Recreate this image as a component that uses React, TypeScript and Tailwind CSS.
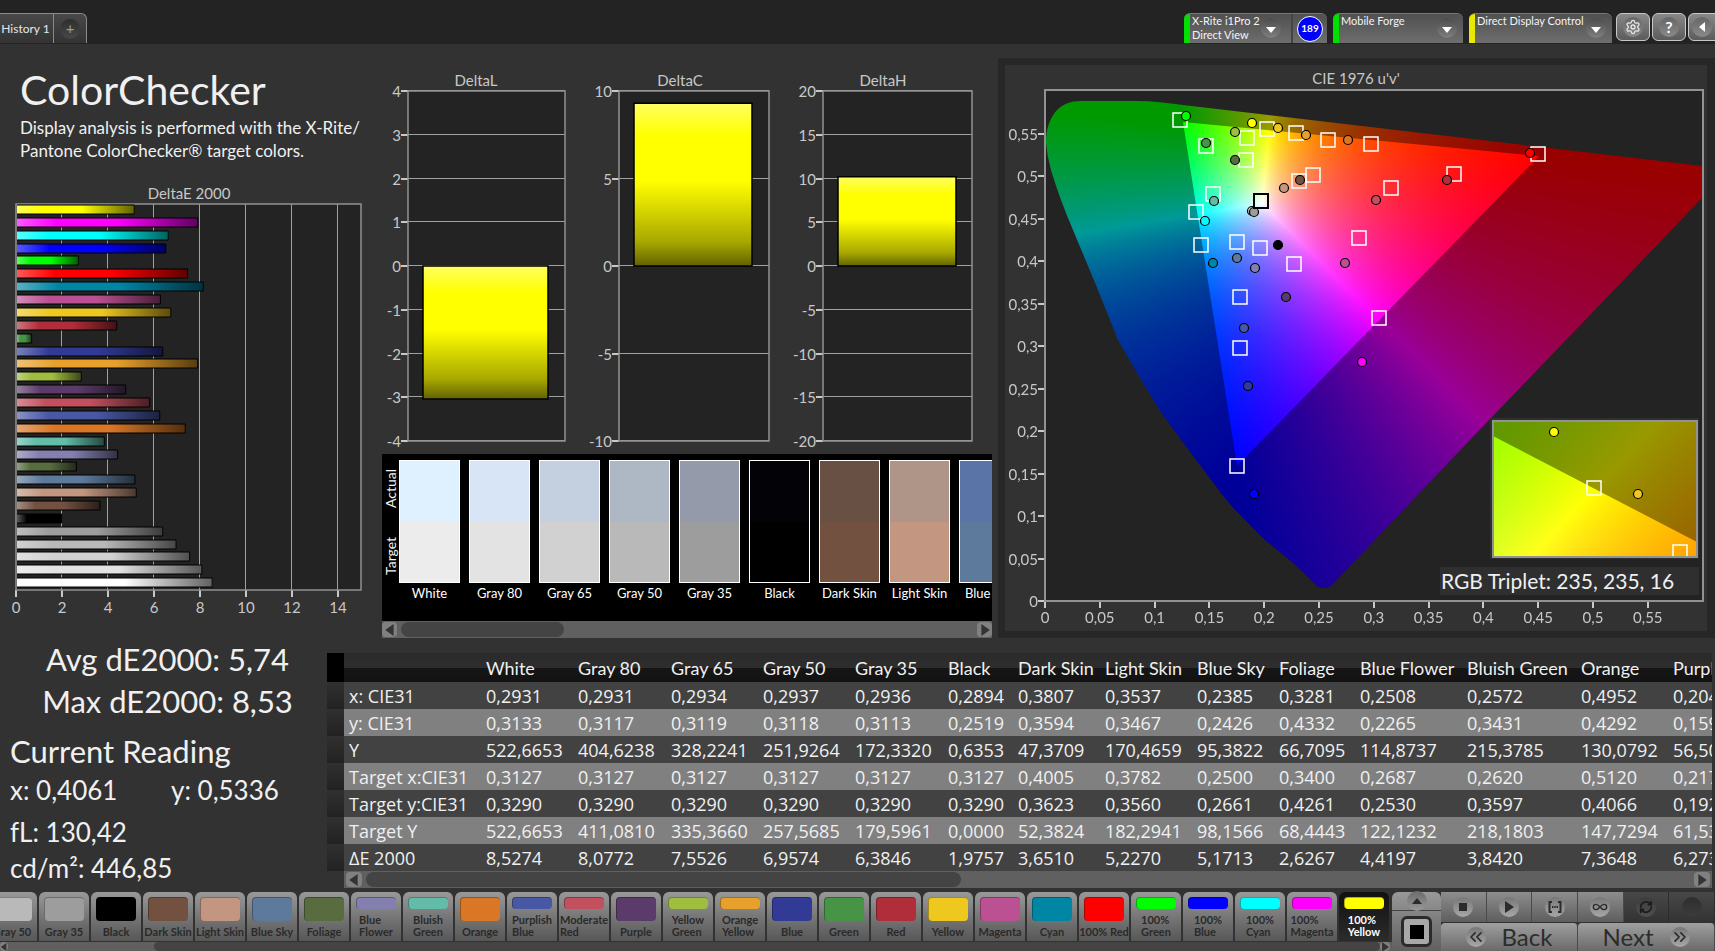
import { useEffect, useRef, type ReactNode } from 'react';
import { Settings, RefreshCw, Infinity as Loop, ChevronsLeft, ChevronsRight } from 'lucide-react';
import clsx from 'clsx';

interface Patch { name: string; color: string; de: number; actual?: string; lines?: string[]; }
interface Column { name: string; width: string; values: string[]; }
interface DeltaProps { title: string; x: number; w: number; titleX: number; max: number; step: number; value: number; barX: number; barW: number; }

const patches: Patch[] = [
  { name: 'White', color: '#ececec', de: 8.53, actual: '#dff1ff' },
  { name: 'Gray 80', color: '#e3e3e3', de: 8.08, actual: '#d8e5f7' },
  { name: 'Gray 65', color: '#d1d1d1', de: 7.55, actual: '#c4d0e0' },
  { name: 'Gray 50', color: '#b9b9b9', de: 6.96, actual: '#adb8c4' },
  { name: 'Gray 35', color: '#9d9d9d', de: 6.38, actual: '#949aa9' },
  { name: 'Black', color: '#000000', de: 1.98, actual: '#030207' },
  { name: 'Dark Skin', color: '#735141', de: 3.65, actual: '#685144' },
  { name: 'Light Skin', color: '#c29680', de: 5.23, actual: '#af9588' },
  { name: 'Blue Sky', color: '#5d7a9c', de: 5.17, actual: '#5a74a7' },
  { name: 'Foliage', color: '#586c40', de: 2.63 },
  { name: 'Blue Flower', color: '#8380b0', de: 4.42, lines: ['Blue', 'Flower'] },
  { name: 'Bluish Green', color: '#62bca8', de: 3.84, lines: ['Bluish', 'Green'] },
  { name: 'Orange', color: '#d97726', de: 7.36 },
  { name: 'Purplish Blue', color: '#4958a4', de: 6.25, lines: ['Purplish', 'Blue'] },
  { name: 'Moderate Red', color: '#c2505e', de: 5.81, lines: ['Moderate', 'Red'] },
  { name: 'Purple', color: '#5b3b69', de: 4.77 },
  { name: 'Yellow Green', color: '#9fbd3f', de: 2.84, lines: ['Yellow', 'Green'] },
  { name: 'Orange Yellow', color: '#e6a02b', de: 7.9, lines: ['Orange', 'Yellow'] },
  { name: 'Blue', color: '#313b96', de: 6.38 },
  { name: 'Green', color: '#479447', de: 0.68 },
  { name: 'Red', color: '#b02e39', de: 4.38 },
  { name: 'Yellow', color: '#eec81e', de: 6.73 },
  { name: 'Magenta', color: '#bb5192', de: 6.28 },
  { name: 'Cyan', color: '#0086a5', de: 8.14 },
  { name: '100% Red', color: '#ff0000', de: 7.46 },
  { name: '100% Green', color: '#00ff00', de: 2.71, lines: ['100%', 'Green'] },
  { name: '100% Blue', color: '#0000ff', de: 6.51, lines: ['100%', 'Blue'] },
  { name: '100% Cyan', color: '#00ffff', de: 6.62, lines: ['100%', 'Cyan'] },
  { name: '100% Magenta', color: '#ff00ff', de: 7.9, lines: ['100%', 'Magenta'] },
  { name: '100% Yellow', color: '#ffff00', de: 5.14, lines: ['100%', 'Yellow'] },
];

const rowLabels = ['x: CIE31', 'y: CIE31', 'Y', 'Target x:CIE31', 'Target y:CIE31', 'Target Y', 'ΔE 2000'];

const columns: Column[] = [
  { name: 'White', width: 'w-[92px]', values: ['0,2931', '0,3133', '522,6653', '0,3127', '0,3290', '522,6653', '8,5274'] },
  { name: 'Gray 80', width: 'w-[93px]', values: ['0,2931', '0,3117', '404,6238', '0,3127', '0,3290', '411,0810', '8,0772'] },
  { name: 'Gray 65', width: 'w-[92px]', values: ['0,2934', '0,3119', '328,2241', '0,3127', '0,3290', '335,3660', '7,5526'] },
  { name: 'Gray 50', width: 'w-[92px]', values: ['0,2937', '0,3118', '251,9264', '0,3127', '0,3290', '257,5685', '6,9574'] },
  { name: 'Gray 35', width: 'w-[93px]', values: ['0,2936', '0,3113', '172,3320', '0,3127', '0,3290', '179,5961', '6,3846'] },
  { name: 'Black', width: 'w-[70px]', values: ['0,2894', '0,2519', '0,6353', '0,3127', '0,3290', '0,0000', '1,9757'] },
  { name: 'Dark Skin', width: 'w-[87px]', values: ['0,3807', '0,3594', '47,3709', '0,4005', '0,3623', '52,3824', '3,6510'] },
  { name: 'Light Skin', width: 'w-[92px]', values: ['0,3537', '0,3467', '170,4659', '0,3782', '0,3560', '182,2941', '5,2270'] },
  { name: 'Blue Sky', width: 'w-[82px]', values: ['0,2385', '0,2426', '95,3822', '0,2500', '0,2661', '98,1566', '5,1713'] },
  { name: 'Foliage', width: 'w-[81px]', values: ['0,3281', '0,4332', '66,7095', '0,3400', '0,4261', '68,4443', '2,6267'] },
  { name: 'Blue Flower', width: 'w-[107px]', values: ['0,2508', '0,2265', '114,8737', '0,2687', '0,2530', '122,1232', '4,4197'] },
  { name: 'Bluish Green', width: 'w-[114px]', values: ['0,2572', '0,3431', '215,3785', '0,2620', '0,3597', '218,1803', '3,8420'] },
  { name: 'Orange', width: 'w-[92px]', values: ['0,4952', '0,4292', '130,0792', '0,5120', '0,4066', '147,7294', '7,3648'] },
  { name: 'Purplish Blue', width: 'w-[120px]', values: ['0,2041', '0,1593', '56,5012', '0,2170', '0,1920', '61,5324', '6,2731'] },
];

// positions inside the 658x510 plot area
const targets = [
  [135, 30], [161, 56], [202, 48], [222, 39], [251, 43], [283, 50], [326, 54], [493, 64], [201, 70], [254, 91], [268, 85], [346, 98], [409, 84],
  [168, 104], [151, 122], [156, 155], [192, 152], [215, 158], [249, 174], [314, 148], [195, 207], [334, 228], [195, 258], [192, 376],
];
const readings: [number, number, string][] = [
  [141, 26, '#00ff00'], [207, 33, '#ffff00'], [190, 42, '#9fbd3f'], [233, 38, '#eec81e'], [261, 45, '#e6a02b'], [303, 50, '#d97726'],
  [161, 53, '#479447'], [190, 70, '#586c40'], [255, 90, '#735141'], [239, 98, '#c29680'], [485, 63, '#ff0000'], [402, 90, '#b02e39'],
  [331, 110, '#c2505e'], [169, 111, '#62bca8'], [160, 131, '#00ffff'], [207, 121, '#d1d1d1'], [209, 122, '#9d9d9d'], [233, 155, '#000000'],
  [168, 173, '#0086a5'], [192, 168, '#5d7a9c'], [210, 178, '#8380b0'], [300, 173, '#bb5192'], [241, 207, '#5b3b69'], [199, 238, '#4958a4'],
  [317, 272, '#ff00ff'], [203, 296, '#313b96'], [209, 404, '#0000ff'],
];

const locus = 'M1 53C1 38 5 28 12 20C18 14 26 11 36 11L92 11C108 11 122 13 138 15L658 76V107L521 250L446 328L286 496Q279 500 272 496L247 472L220 450L197 427Q182 412 170 395L142 358L115 321L92 283L73 250L53 200L28 140Q15 110 6 80Q2 66 1 53Z';
const gamut = 'M138 32L494 66L192 376Z';

function paint(canvas: HTMLCanvasElement, toXy: (px: number, py: number) => [number, number], triangle: string, outline?: string) {
  const ctx = canvas.getContext('2d');
  if (!ctx) return;
  const { width, height } = canvas;
  const img = ctx.createImageData(width, height);
  for (let py = 0; py < height; py++) {
    for (let px = 0; px < width; px++) {
      const [x, y] = toXy(px, py);
      const z = 1 - x - y;
      const r = Math.max(0, 3.2406 * x - 1.5372 * y - 0.4986 * z);
      const g = Math.max(0, -0.9689 * x + 1.8758 * y + 0.0415 * z);
      const b = Math.max(0, 0.0557 * x - 0.204 * y + 1.057 * z);
      const m = Math.max(r, g, b) || 1;
      const i = (py * width + px) * 4;
      img.data[i] = (r / m) * 255;
      img.data[i + 1] = (g / m) * 255;
      img.data[i + 2] = (b / m) * 255;
      img.data[i + 3] = 255;
    }
  }
  ctx.putImageData(img, 0, 0);
  // everything outside the display gamut is dimmed
  ctx.fillStyle = 'rgba(0,0,0,0.4)';
  ctx.fill(new Path2D(`M0 0H${width}V${height}H0Z${triangle}`), 'evenodd');
  if (outline) {
    ctx.globalCompositeOperation = 'destination-in';
    ctx.fillStyle = '#000';
    ctx.fill(new Path2D(outline));
    ctx.globalCompositeOperation = 'source-over';
  }
}

function Chromaticity() {
  const main = useRef<HTMLCanvasElement>(null);
  const inset = useRef<HTMLCanvasElement>(null);

  useEffect(() => {
    if (main.current) {
      paint(main.current, (px, py) => {
        const u = px / 1096;
        const v = (510 - py) / 848;
        const d = 6 * u - 16 * v + 12;
        return [(9 * u) / d, (4 * v) / d];
      }, gamut, locus);
    }
    if (inset.current) paint(inset.current, (px, py) => [0.4193 + (px - 101) / 3038, 0.5053 - (py - 67) / 1990], 'M0 15L204 121V136H0Z');
  }, []);

  return (
    <svg viewBox="0 0 702 565" className="block w-full bg-[#323232] text-[15px]" fontFamily="Lato, sans-serif">
      <text x="351" y="19" textAnchor="middle" fill="#c8c8c8">CIE 1976 u'v'</text>
      <rect x="40" y="25" width="658" height="510" fill="#232323" />
      <foreignObject x="40" y="25" width="658" height="510"><canvas ref={main} width={658} height={510} className="block" /></foreignObject>
      <rect x="40" y="25" width="658" height="511" fill="none" stroke="#929292" strokeWidth="2" />
      {Array.from({ length: 12 }, (_, i) => {
        const label = String((i * 5) / 100).replace('.', ',');
        const x = 40 + i * 54.8;
        const y = 536 - i * 42.5;
        return (
          <g key={i} fill="#c8c8c8">
            <rect x={Math.round(x) - 1} y="537" width="2" height="6" />
            <rect x="33" y={Math.round(y) - 1} width="6" height="2" />
            <text x={x} y="558" textAnchor="middle">{label}</text>
            <text x="33" y={y + 6} textAnchor="end">{label}</text>
          </g>
        );
      })}
      <g transform="translate(40 25)">
        {targets.map(([x, y]) => <rect key={`${x}-${y}`} x={x - 7} y={y - 7} width="14" height="14" fill="none" stroke="#fff" strokeWidth="1.5" />)}
        {readings.map(([x, y, c]) => <circle key={`${x}-${y}`} cx={x} cy={y} r="4.5" fill={c} stroke="#000" strokeWidth="1.2" />)}
        <rect x="209" y="104" width="14" height="14" fill="none" stroke="#000" strokeWidth="2" />
      </g>
      <rect x="485" y="353" width="209" height="141" fill="#2f2f2f" />
      <foreignObject x="488" y="356" width="204" height="136"><canvas ref={inset} width={204} height={136} className="block" /></foreignObject>
      <path d="M668 492V480H682V492" fill="none" stroke="#fff" strokeWidth="1.5" />
      <rect x="488" y="356" width="204" height="136" fill="none" stroke="#929292" strokeWidth="2" />
      <rect x="582" y="416" width="14" height="14" fill="none" stroke="#fff" strokeWidth="1.5" />
      <circle cx="549" cy="367" r="4.5" fill="#ffff00" stroke="#000" strokeWidth="1.2" />
      <circle cx="633" cy="429" r="4.5" fill="#eec81e" stroke="#000" strokeWidth="1.2" />
      <rect x="435" y="502" width="259" height="28" fill="#2f2f2f" />
      <text x="436" y="524" fill="#f0f0f0" fontSize="21">RGB Triplet: 235, 235, 16</text>
    </svg>
  );
}

function DeltaEChart() {
  const bars = [...patches].reverse();
  return (
    <svg viewBox="0 0 382 444" className="block w-full text-[15px]" fontFamily="Lato, sans-serif">
      <defs>
        <linearGradient id="shadeX">
          <stop offset="0" stopColor="#fff" stopOpacity="0.35" />
          <stop offset="0.22" stopColor="#fff" stopOpacity="0" />
          <stop offset="0.55" stopColor="#000" stopOpacity="0" />
          <stop offset="1" stopColor="#000" stopOpacity="0.62" />
        </linearGradient>
      </defs>
      <text x="189" y="15" textAnchor="middle" fill="#c8c8c8">DeltaE 2000</text>
      <rect x="16" y="20" width="345" height="386" fill="#232323" />
      {[0, 2, 4, 6, 8, 10, 12, 14].map((n) => (
        <g key={n} fill="#c8c8c8">
          {n > 0 && <rect x={15 + n * 23} y="20" width="1" height="386" fill="#a0a0a0" />}
          <rect x={15 + n * 23} y="406" width="2" height="7" />
          <text x={16 + n * 23} y="429" textAnchor="middle">{n}</text>
        </g>
      ))}
      <rect x="16" y="20" width="345" height="386" fill="none" stroke="#929292" strokeWidth="1.5" />
      {bars.map((p, i) => {
        const y = Math.round(21 + i * 12.87);
        return (
          <g key={p.name}>
            <rect x="17" y={y} width={p.de * 23 - 1} height="9" fill={p.name === 'White' ? '#ffffff' : p.color} />
            <rect x="17" y={y} width={p.de * 23 - 1} height="9" fill="url(#shadeX)" />
            <path d={`M17 ${y}H${16 + p.de * 23}V${y + 9}H17`} fill="none" stroke="#000" />
          </g>
        );
      })}
    </svg>
  );
}

function DeltaChart({ title, x, w, titleX, max, step, value, barX, barW }: DeltaProps) {
  const ticks: number[] = [];
  for (let n = max; n >= -max; n -= step) ticks.push(n);
  const toY = (n: number) => 222 - (n / max) * 175;
  const top = Math.min(toY(0), toY(value));
  return (
    <g>
      <text x={titleX} y="42" textAnchor="middle" fill="#c8c8c8">{title}</text>
      <rect x={x} y="47" width={w} height="350" fill="#232323" />
      {ticks.map((n) => (
        <g key={n}>
          <rect x={x - 7} y={Math.round(toY(n)) - 1} width="7" height="2" fill="#c8c8c8" />
          <rect x={x} y={Math.round(toY(n)) - 1} width={w} height="1" fill="#a0a0a0" />
          <text x={x - 7} y={toY(n) + 6} textAnchor="end" fill="#c8c8c8">{n}</text>
        </g>
      ))}
      <rect x={x} y="47" width={w} height="350" fill="none" stroke="#929292" strokeWidth="1.5" />
      <rect x={barX} y={top} width={barW} height={Math.abs(toY(value) - toY(0))} fill="url(#yellowY)" stroke="#000" strokeWidth="1.5" />
    </g>
  );
}

function ArrowButton({ dir, label, className }: { dir: 'left' | 'right'; label: string; className?: string }) {
  return (
    <button aria-label={label} className={clsx('flex shrink-0 items-center justify-center rounded bg-[#808080]', className)}>
      <svg viewBox="0 0 10 10" className="h-3 w-3" fill="#333"><path d={dir === 'left' ? 'M8 0V10L1 5Z' : 'M2 0V10L9 5Z'} /></svg>
    </button>
  );
}

function Round({ children, className }: { children?: ReactNode; className?: string }) {
  return <span className={clsx('flex h-5 w-5 shrink-0 items-center justify-center rounded-full bg-gradient-to-b', className ?? 'from-[#777] to-[#a8a8a8]')}>{children}</span>;
}

function Device({ bar, lines, width, badge }: { bar: string; lines: string[]; width: string; badge?: string }) {
  return (
    <div className={clsx('flex h-[30px] overflow-hidden rounded-t-md border-t border-[#777] bg-gradient-to-b from-[#505050] to-[#6e6e6e]', width)}>
      <span className={clsx('w-1.5 shrink-0', bar)} />
      <button className={clsx('flex min-w-0 flex-1 justify-between pl-0.5 text-left text-[11px] leading-[14px] text-gray-100', badge ? 'pr-2.5' : 'pr-1.5')}>
        <span className="whitespace-nowrap">{lines.map((l) => <span key={l} className="block">{l}</span>)}</span>
        <Round className="mt-1 from-[#4c4c4c] to-[#808080]"><svg viewBox="0 0 10 6" className="mt-1 h-1.5 w-2.5" fill="#fff"><path d="M0 0H10L5 6Z" /></svg></Round>
      </button>
      {badge && (
        <span className="flex w-9 shrink-0 items-center justify-center border-l-2 border-[#444]">
          <span className="flex h-[26px] w-[26px] items-center justify-center rounded-full border border-white bg-[#0000ff] text-[10px] font-bold text-white">{badge}</span>
        </span>
      )}
    </div>
  );
}

function TopBar() {
  const square = 'flex h-7 w-[34px] shrink-0 items-center justify-center rounded-md border border-[#c8c8c8] bg-gradient-to-b from-[#888] to-[#5c5c5c]';
  return (
    <header className="flex h-11 items-start justify-between bg-[#232323] pt-[13px]">
      <div className="flex h-[30px] overflow-hidden rounded-tr-md border-t border-r border-[#8a8a8a] bg-gradient-to-b from-[#484848] to-[#333] text-gray-200">
        <button className="w-[53px] whitespace-nowrap pr-0.5 text-[12px]">History 1</button>
        <button aria-label="Add history" className="flex w-[33px] items-center justify-center border-l border-[#8a8a8a]">
          <Round className="from-[#2e2e2e] to-[#484848] text-[15px] leading-none text-[#9a9a9a]">+</Round>
        </button>
      </div>
      <div className="flex">
        <Device bar="bg-[#00e000]" lines={['X-Rite i1Pro 2', 'Direct View']} width="w-[143px]" badge="189" />
        <Device bar="bg-[#00e000]" lines={['Mobile Forge']} width="ml-1.5 w-[130px]" />
        <Device bar="bg-[#e8e800]" lines={['Direct Display Control']} width="ml-1.5 w-[143px]" />
        <button aria-label="Settings" className={clsx(square, 'ml-1')}><Round className="from-[#666] to-[#8a8a8a]"><Settings className="h-4 w-4 text-gray-200" /></Round></button>
        <button aria-label="Help" className={clsx(square, 'ml-0.5')}><Round className="from-[#666] to-[#8a8a8a] text-[16px] font-bold text-white">?</Round></button>
        <div className="ml-0.5 w-[27px] overflow-hidden">
          <button aria-label="Collapse" className={square}><Round className="mr-1.5 from-[#666] to-[#8a8a8a]"><svg viewBox="0 0 6 10" className="h-2.5 w-1.5" fill="#fff"><path d="M6 0V10L0 5Z" /></svg></Round></button>
        </div>
      </div>
    </header>
  );
}

function SwatchStrip() {
  return (
    <div className="mr-1.5 bg-black">
      <div className="flex h-[167px]">
        <div className="flex h-[136px] w-[17px] shrink-0 rotate-180 text-center text-[14px] leading-[17px] text-gray-100 [writing-mode:vertical-rl]">
          <span className="flex-1">Target</span>
          <span className="flex-1">Actual</span>
        </div>
        <div className="flex min-w-0 flex-1 gap-[9px] overflow-hidden pt-1.5">
          {patches.slice(0, 9).map((p) => (
            <figure key={p.name} className="w-[61px] shrink-0">
              <div className="flex h-[123px] flex-col border border-white" style={{ backgroundColor: p.color }}>
                <div className="h-1/2" style={{ backgroundColor: p.actual }} />
              </div>
              <figcaption className="flex justify-center whitespace-nowrap text-[13px] leading-5 text-white">{p.name}</figcaption>
            </figure>
          ))}
        </div>
      </div>
      <div className="flex h-[17px] items-center gap-1 bg-[#606060]">
        <ArrowButton dir="left" label="Scroll swatches left" className="h-[15px] w-[15px]" />
        <div className="h-[15px] w-[163px] rounded-full bg-[#444]" />
        <ArrowButton dir="right" label="Scroll swatches right" className="ml-auto h-[15px] w-[15px]" />
      </div>
    </div>
  );
}

function Readings() {
  return (
    <div className="w-[327px] shrink-0 whitespace-nowrap text-[#f0f0f0]">
      <div className="pl-2 text-center text-[31px] leading-[42px]">
        <p>Avg dE2000: 5,74</p>
        <p>Max dE2000: 8,53</p>
      </div>
      <div className="pl-2.5">
        <h2 className="pt-2 text-[31px] leading-[42px]">Current Reading</h2>
        <p className="flex text-[26px] leading-9"><span className="w-[161px]">x: 0,4061</span><span>y: 0,5336</span></p>
        <p className="pt-1 text-[26px] leading-10">fL: 130,42</p>
        <p className="text-[26px] leading-8">cd/m²: 446,85</p>
      </div>
    </div>
  );
}

function DataTable() {
  return (
    <div className="mr-[3px] min-w-0 flex-1 pt-[15px]">
      <div className="overflow-hidden">
        <table className="w-[1461px] table-fixed border-collapse text-left text-[#f0f0f0]">
          <thead>
            <tr className="h-[29px] bg-linear-[to_bottom,#2a2a2a_0,#2e2e2e_50%,#161616_50%,#121212_100%] text-[18px] leading-7">
              <th className="w-[17px] bg-black" />
              <th className="w-[137px]" />
              {columns.map((c) => <th key={c.name} scope="col" className={clsx('whitespace-nowrap pl-[5px] font-normal', c.width)}>{c.name}</th>)}
            </tr>
          </thead>
          <tbody className="font-['Open_Sans','Noto_Sans',sans-serif] text-[18px] leading-[26px]">
            {rowLabels.map((label, i) => (
              <tr key={label} className={clsx('h-[27px]', i % 2 ? 'bg-[#808080]' : 'bg-[#424242]')}>
                <td className="bg-gradient-to-b from-[#303030] to-[#222]" />
                <th scope="row" className="whitespace-nowrap pl-[5px] font-normal">{label}</th>
                {columns.map((c) => <td key={c.name} className="pl-[5px]">{c.values[i]}</td>)}
              </tr>
            ))}
          </tbody>
        </table>
      </div>
      <div className="ml-[17px] flex h-[17px] items-center gap-1 bg-[#606060] px-0.5">
        <ArrowButton dir="left" label="Scroll table left" className="h-[15px] w-4" />
        <div className="h-[15px] w-[595px] rounded-full bg-[#444]" />
        <ArrowButton dir="right" label="Scroll table right" className="ml-auto h-[15px] w-4" />
      </div>
    </div>
  );
}

function PatchBar() {
  return (
    <div className="min-w-0 flex-1 overflow-hidden">
      <div className="flex h-[50px] justify-end gap-0.5 pr-[3px]">
        {patches.slice(3).map((p) => {
          const active = p.name === '100% Yellow';
          return (
            <button key={p.name} className={clsx('flex h-[49px] w-[50px] shrink-0 flex-col items-center justify-between rounded-t-md bg-gradient-to-b pt-[5px] pb-[3px] text-[11px] font-bold leading-3', active ? 'from-[#111] to-[#2c2c2c] text-white' : 'from-[#999] to-[#575757] text-[#2a2a2a]')}>
              <span className={clsx('w-10 rounded border-t border-l border-black/30', p.lines ? 'h-3' : 'h-6')} style={{ backgroundColor: p.color }} />
              <span className="whitespace-nowrap text-left">{(p.lines ?? [p.name]).map((l) => <span key={l} className="block">{l}</span>)}</span>
            </button>
          );
        })}
      </div>
      <div className="flex h-[9px] items-center bg-[#606060]">
        <ArrowButton dir="left" label="Scroll patches left" className="h-[9px] w-2 overflow-hidden" />
        <div className="ml-[146px] h-[9px] flex-1 rounded-full bg-[#444]" />
        <ArrowButton dir="right" label="Scroll patches right" className="mr-0.5 h-[9px] w-2.5 overflow-hidden" />
      </div>
    </div>
  );
}

function Transport() {
  const cell = 'flex flex-1 items-center justify-center border-r border-[#4a4a4a] bg-gradient-to-b from-[#8e8e8e] to-[#5e5e5e]';
  const off = 'flex flex-1 items-center justify-center border-r border-[#2c2c2c] bg-gradient-to-b from-[#484848] to-[#333]';
  const wide = 'flex flex-1 items-center justify-center gap-4 rounded-t border-r border-[#4a4a4a] bg-gradient-to-b from-[#a0a0a0] to-[#6a6a6a] text-[24px] leading-none text-[#2c2c2c]';
  return (
    <>
      <div className="flex w-[49px] shrink-0 flex-col items-center rounded-t-md bg-gradient-to-b from-[#999] to-[#606060]">
        <button aria-label="Expand" className="flex h-[19px] w-full items-center justify-center border-b border-[#444]">
          <Round className="from-[#6c6c6c] to-[#999]"><svg viewBox="0 0 10 6" className="h-1.5 w-2.5" fill="#2c2c2c"><path d="M0 6H10L5 0Z" /></svg></Round>
        </button>
        <button aria-label="Pattern window" className="mt-[5px] flex h-[31px] w-[31px] items-center justify-center rounded-md border-3 border-[#2b2b2b] bg-[#a8a8a8]">
          <span className="h-3.5 w-3.5 bg-black" />
        </button>
      </div>
      <div className="flex w-[274px] shrink-0 flex-col gap-px">
        <div className="flex h-[30px]">
          <button aria-label="Stop" className={cell}><Round><span className="h-2 w-2 bg-[#2b2b2b]" /></Round></button>
          <button aria-label="Play" className={cell}><Round><svg viewBox="0 0 10 12" className="h-3 w-2.5" fill="#2b2b2b"><path d="M1 0L10 6L1 12Z" /></svg></Round></button>
          <button aria-label="Play range" className={cell}><Round><svg viewBox="0 0 14 12" className="h-3 w-3.5" fill="none" stroke="#2b2b2b" strokeWidth="2"><path d="M4 1H1.5V11H4M10 1H12.5V11H10M4 6H5.5M6.3 6H7.7M8.5 6H10" /></svg></Round></button>
          <button aria-label="Loop" className={cell}><Round><Loop className="h-4 w-4 text-[#2b2b2b]" /></Round></button>
          <button aria-label="Refresh" className={off}><Round className="from-[#3c3c3c] to-[#505050]"><RefreshCw className="h-3.5 w-3.5 text-[#1c1c1c]" strokeWidth={3} /></Round></button>
          <button aria-label="Record" className={off}><Round className="from-[#2e2e2e] to-[#3c3c3c]" /></button>
        </div>
        <div className="flex h-7">
          <button className={wide}><Round><ChevronsLeft className="h-5 w-5" /></Round>Back</button>
          <button className={wide}>Next<Round><ChevronsRight className="h-5 w-5" /></Round></button>
        </div>
      </div>
    </>
  );
}

export default function App() {
  return (
    <div className="flex min-h-screen flex-col overflow-hidden bg-[#323232] font-[Lato,sans-serif]">
      <TopBar />
      <main className="flex-1">
        <div className="grid grid-cols-[382fr_616fr_717fr]">
          <section>
            <div className="h-[140px] pt-5 pl-5 text-[#f0f0f0]">
              <h1 className="text-[41px] leading-[52px]">ColorChecker</h1>
              <p className="whitespace-nowrap text-[17px] leading-[23px]">Display analysis is performed with the X-Rite/<br />Pantone ColorChecker® target colors.</p>
            </div>
            <DeltaEChart />
          </section>
          <section className="min-w-0">
            <svg viewBox="0 0 616 410" className="block w-full text-[15px]" fontFamily="Lato, sans-serif">
              <defs>
                <linearGradient id="yellowY" x1="0" y1="0" x2="0" y2="1">
                  <stop offset="0" stopColor="#ffff60" />
                  <stop offset="0.2" stopColor="#ffff00" />
                  <stop offset="0.48" stopColor="#ffff00" />
                  <stop offset="0.85" stopColor="#a8a800" />
                  <stop offset="1" stopColor="#626200" />
                </linearGradient>
              </defs>
              <DeltaChart title="DeltaL" x={26} w={157} titleX={94} max={4} step={1} value={-3.04} barX={41} barW={125} />
              <DeltaChart title="DeltaC" x={237} w={150} titleX={298} max={10} step={5} value={9.3} barX={252} barW={118} />
              <DeltaChart title="DeltaH" x={441} w={149} titleX={501} max={20} step={5} value={10.2} barX={456} barW={118} />
            </svg>
            <SwatchStrip />
          </section>
          <section className="mt-3.5 border-y-7 border-r-8 border-l-7 border-[#272727]">
            <Chromaticity />
          </section>
        </div>
        <div className="flex">
          <Readings />
          <DataTable />
        </div>
      </main>
      <footer className="flex h-[59px] bg-[#323232]">
        <PatchBar />
        <Transport />
      </footer>
    </div>
  );
}
